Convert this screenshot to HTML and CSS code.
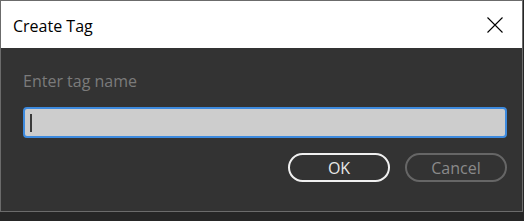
FILE: index.html
```html
<!DOCTYPE html>
<html lang="en">
<head>
    <meta charset="UTF-8">
    <meta name="viewport" content="width=device-width, initial-scale=1.0">
    <title>Create Tag</title>
    <link rel="stylesheet" href="styles.css">
</head>
<body>
<div class="dialog">
    <div class="title-bar">
        <span class="title">Create Tag</span>
        <svg class="close-icon" width="16" height="16" viewBox="0 0 16 16">
            <path d="M0.5 0.5 L15.5 15.5 M15.5 0.5 L0.5 15.5" stroke="#000" stroke-width="1.1" fill="none"/>
        </svg>
    </div>
    <div class="dialog-body">
        <div class="field-label">Enter tag name</div>
        <div class="tag-input"><span class="caret"></span></div>
        <div class="buttons">
            <button class="ok-btn">OK</button>
            <button class="cancel-btn">Cancel</button>
        </div>
    </div>
</div>
</body>
</html>
```

FILE: styles.css
```css
body {
    margin: 0;
    padding: 0;
    background-color: #262626;
    font-family: "Open Sans", "Noto Sans", sans-serif;
}

.dialog {
    width: 523px;
    height: 212px;
    box-sizing: border-box;
    border: 1px solid #6b6b6b;
    display: flex;
    flex-direction: column;
}

.title-bar {
    height: 47px;
    box-sizing: border-box;
    background-color: #fff;
    display: flex;
    justify-content: space-between;
    align-items: flex-start;
    padding: 14px 19px 0 12px;
}

.title {
    font-size: 16px;
    line-height: 22px;
    color: #000;
}

.close-icon {
    margin-top: 2px;
}

.dialog-body {
    flex: 1;
    background-color: #333;
    padding: 22px 15px 0 22px;
}

.field-label {
    font-size: 16px;
    line-height: 22px;
    color: #7b7b7b;
}

.tag-input {
    margin-top: 15px;
    height: 31px;
    box-sizing: border-box;
    background-color: #cdcdcd;
    border: 2px solid #3d8ade;
    border-radius: 4px;
    display: flex;
    align-items: center;
    padding-left: 5px;
}

.caret {
    width: 2px;
    height: 18px;
    background-color: #3a3a3a;
}

.buttons {
    margin-top: 15px;
    display: flex;
    justify-content: flex-end;
    gap: 15px;
}

.ok-btn, .cancel-btn {
    width: 102px;
    height: 29px;
    padding: 0;
    background: transparent;
    border-radius: 15px;
    font-family: "Open Sans", "Noto Sans", sans-serif;
    font-size: 16px;
    line-height: 20px;
}

.ok-btn {
    border: 2px solid #f0f0f0;
    color: #e8e8e8;
}

.cancel-btn {
    border: 2px solid #666;
    color: #8a8a8a;
}
```
